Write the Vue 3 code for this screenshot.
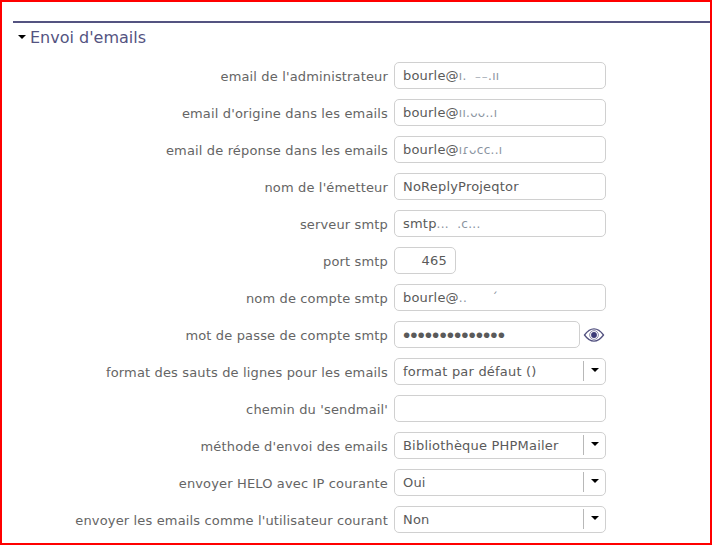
<script setup>
const rows = [
  { label: "email de l'administrateur", type: 'text', value: 'bourle@', blur: 'ı.  ₋₋.ıı' },
  { label: "email d'origine dans les emails", type: 'text', value: 'bourle@', blur: 'ıı.ᴗᴗ..ı' },
  { label: 'email de réponse dans les emails', type: 'text', value: 'bourle@', blur: 'ıɾᴗᴄᴄ..ı' },
  { label: "nom de l'émetteur", type: 'text', value: 'NoReplyProjeqtor' },
  { label: 'serveur smtp', type: 'text', value: 'smtp', blur: '...  .c...' },
  { label: 'port smtp', type: 'num', value: '465' },
  { label: 'nom de compte smtp', type: 'text', value: 'bourle@', blur: '..      ´' },
  { label: 'mot de passe de compte smtp', type: 'pass', value: '••••••••••••••' },
  { label: 'format des sauts de lignes pour les emails', type: 'select', value: 'format par défaut ()' },
  { label: "chemin du 'sendmail'", type: 'text', value: '' },
  { label: "méthode d'envoi des emails", type: 'select', value: 'Bibliothèque PHPMailer' },
  { label: 'envoyer HELO avec IP courante', type: 'select', value: 'Oui' },
  { label: "envoyer les emails comme l'utilisateur courant", type: 'select', value: 'Non' },
]
</script>

<template>
  <div class="frame">
    <section class="section">
      <h2 class="title"><span class="caret"></span>Envoi d'emails</h2>
      <div class="form">
        <template v-for="row in rows" :key="row.label">
          <label class="label">{{ row.label }}</label>
          <div class="control">
            <div v-if="row.type === 'text'" class="field">{{ row.value }}<span v-if="row.blur" class="blur">{{ row.blur }}</span></div>
            <div v-else-if="row.type === 'num'" class="field num">{{ row.value }}</div>
            <template v-else-if="row.type === 'pass'">
              <div class="field pass"><span class="dots">{{ row.value }}</span></div>
              <svg class="eye" width="22" height="16" viewBox="0 0 22 16" fill="none">
                <path d="M1.5 8C5 3.2 8 1.8 11 1.8S17 3.2 20.5 8C17 12.8 14 14.2 11 14.2S5 12.8 1.5 8Z" stroke="#545381" stroke-width="1.3" />
                <circle cx="11" cy="8" r="4.4" stroke="#8f8fb0" stroke-width="1" />
                <circle cx="11" cy="8" r="2.9" fill="#3d3c78" />
              </svg>
            </template>
            <div v-else class="field select">
              <span class="select-value">{{ row.value }}</span>
              <span class="arrow"><span class="caret small"></span></span>
            </div>
          </div>
        </template>
      </div>
    </section>
  </div>
</template>

<style>
html, body { margin: 0; background: #fff; }
</style>

<style scoped>
.frame {
  box-sizing: border-box;
  width: 712px;
  height: 545px;
  border: 2px solid #ff0000;
  overflow: hidden;
  background: #fff;
  font-family: "DejaVu Sans", Verdana, sans-serif;
}
.section {
  margin: 19px 0 0 11px;
  border-top: 2px solid #545381;
}
.title {
  display: flex;
  align-items: center;
  margin: 0;
  height: 30px;
  padding-left: 5px;
  font-size: 16px;
  font-weight: 400;
  line-height: 30px;
  color: #545381;
}
.caret {
  width: 0;
  height: 0;
  margin-right: 4px;
  margin-bottom: 2px;
  border-left: 4px solid transparent;
  border-right: 4px solid transparent;
  border-top: 4px solid #000;
}
.caret.small { margin: 0; }
.form {
  display: grid;
  grid-template-columns: 375px 1fr;
  column-gap: 6px;
  row-gap: 10px;
  margin-top: 9px;
}
.label {
  height: 27px;
  line-height: 29px;
  text-align: right;
  font-size: 13px;
  letter-spacing: 0.15px;
  color: #656565;
  white-space: nowrap;
}
.control {
  display: flex;
  align-items: center;
}
.field {
  box-sizing: border-box;
  width: 212px;
  height: 27px;
  padding: 0 8px;
  border: 1px solid #d0d0d0;
  border-radius: 5px;
  font-size: 13px;
  letter-spacing: 0.2px;
  line-height: 26px;
  color: #5a5a5a;
  white-space: nowrap;
  overflow: hidden;
}
.blur {
  color: #8a94a0;
  letter-spacing: 0.3px;
  font-size: 12px;
  white-space: pre;
}
.num {
  width: 62px;
  text-align: right;
}
.pass {
  width: 186px;
  font-family: "Liberation Sans", Arial, sans-serif;
}
.dots {
  font-size: 20.8px;
  letter-spacing: 0;
  line-height: 25px;
}
.eye {
  margin-left: 3px;
}
.select {
  display: flex;
  align-items: stretch;
  padding-right: 0;
}
.select-value { flex: 1; }
.arrow {
  display: flex;
  align-items: center;
  justify-content: center;
  box-sizing: border-box;
  width: 22px;
  height: 20px;
  margin-top: 2px;
  padding-bottom: 2px;
  border-left: 1px solid #b8b8b8;
}
</style>
